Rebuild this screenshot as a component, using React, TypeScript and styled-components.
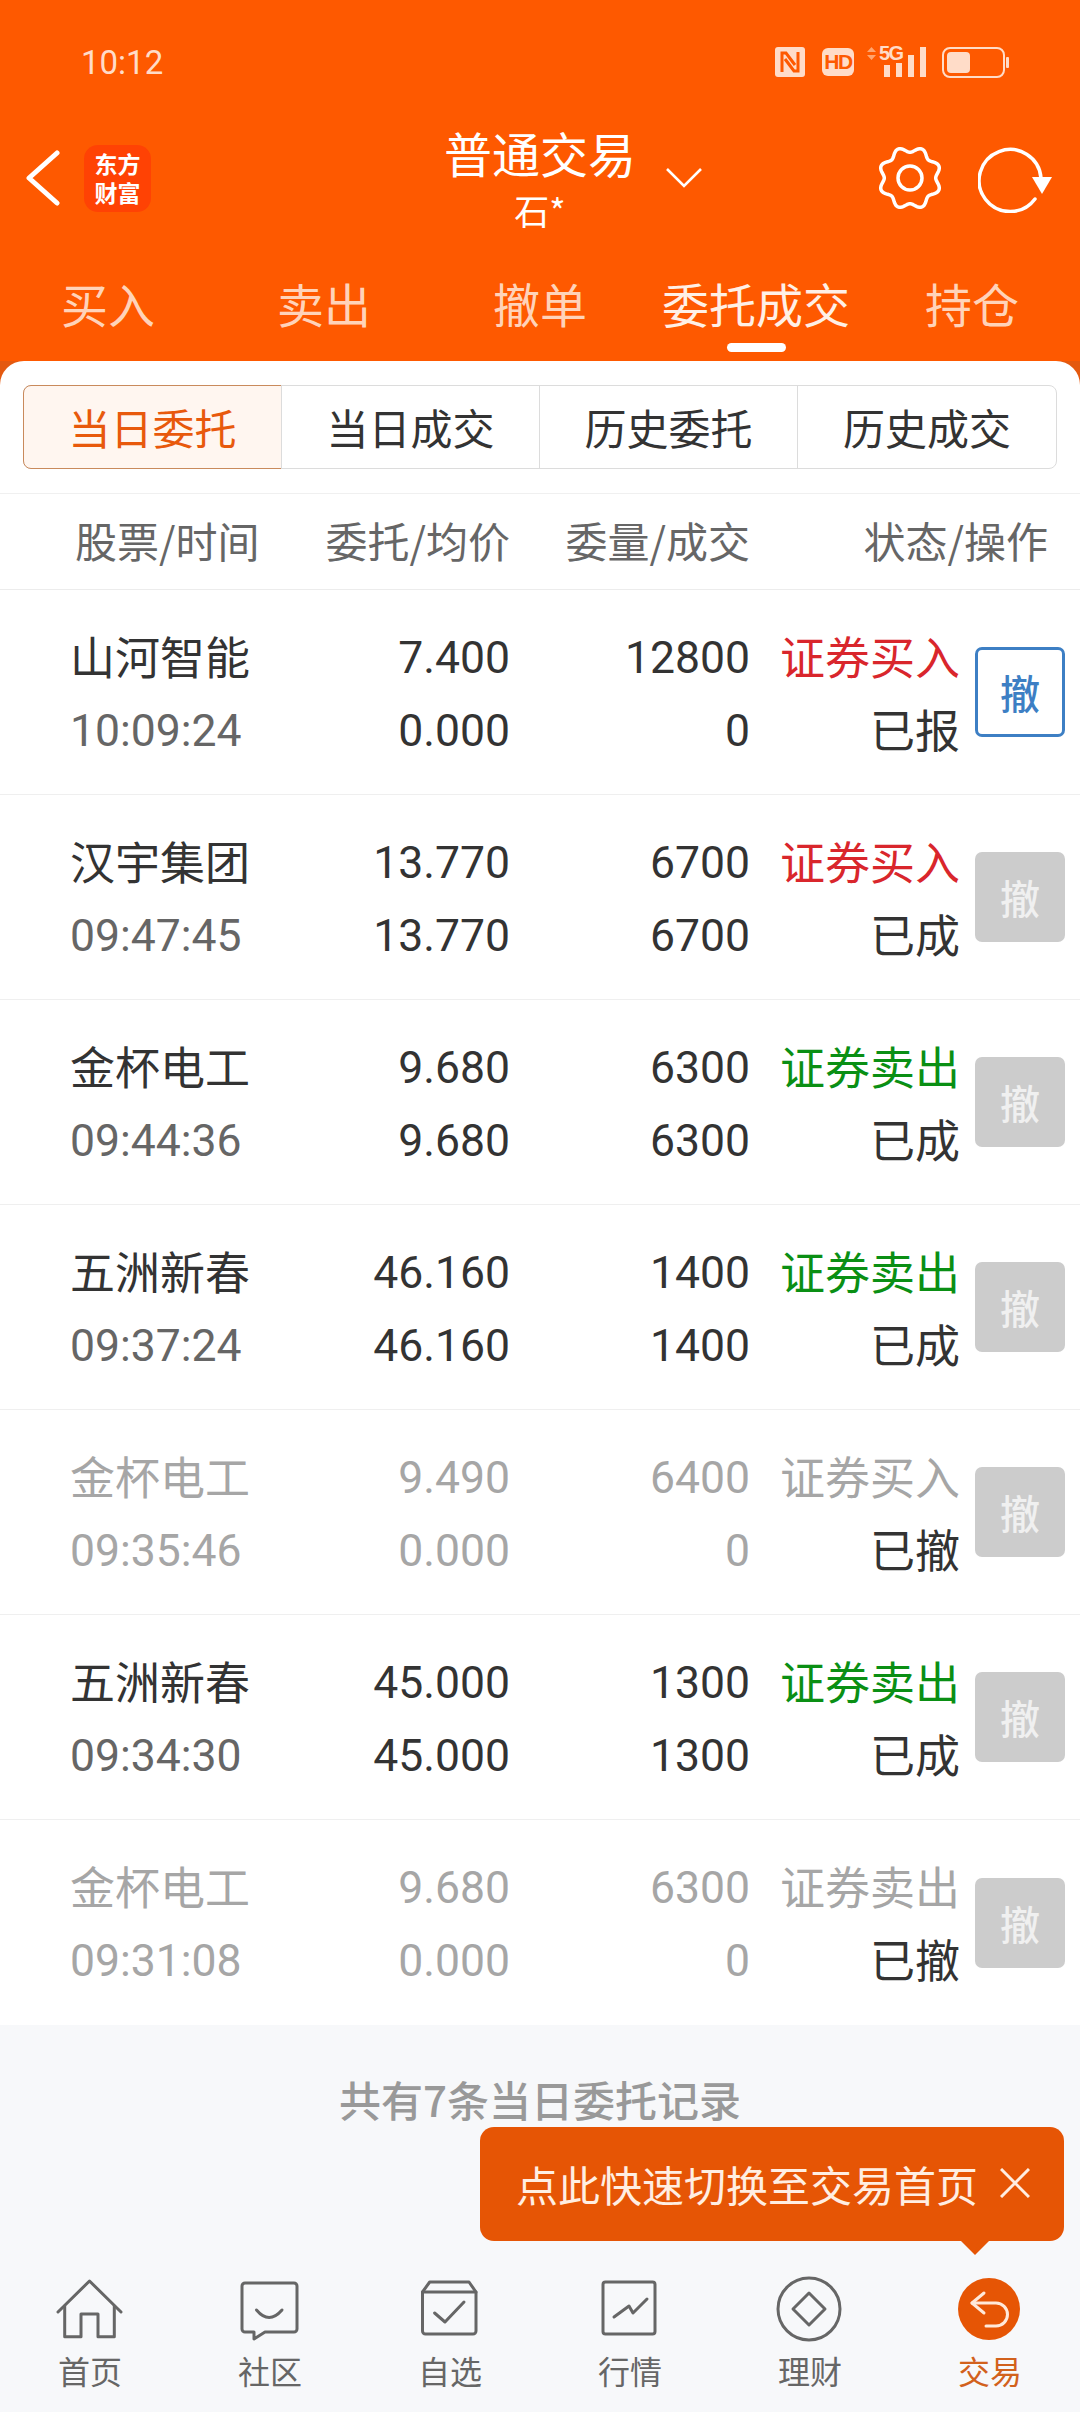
import React from "react";
import styled, { createGlobalStyle } from "styled-components";

const FONT = `"Noto Sans CJK SC", "Noto Sans", sans-serif`;
const NUM = `Roboto, "Noto Sans CJK SC", sans-serif`;
const ORANGE = "#fe5900";

const Global = createGlobalStyle`
  html, body { margin: 0; padding: 0; background: #f7f8fa; }
  * { box-sizing: border-box; }
`;

const Page = styled.div`
  position: relative;
  width: 1080px;
  height: 2412px;
  overflow: hidden;
  display: flex;
  flex-direction: column;
  font-family: ${FONT};
  background: #f7f8fa;
`;
const Top = styled.div`
  background: linear-gradient(${ORANGE} 361px, #e4590f 361px);
  height: 385px;
  display: flex;
  flex-direction: column;
`;
const StatusBar = styled.div`
  height: 110px;
  padding: 14px 71px 0 81px;
  display: flex;
  align-items: center;
  justify-content: space-between;
  color: #ffdcc8;
`;
const Clock = styled.span`
  font: 400 33px ${NUM};
`;
const StatusIcons = styled.div`
  display: flex;
  align-items: center;
`;
const HdBadge = styled.span`
  width: 32px;
  height: 28px;
  margin: 0 13px 0 17px;
  border-radius: 6px;
  background: #ffdcc8;
  color: ${ORANGE};
  font: 700 21px/28px "Liberation Sans", sans-serif;
  text-align: center;
  letter-spacing: -1.5px;
`;
const NetBlock = styled.div`
  position: relative;
  width: 59px;
  height: 30px;
  margin-right: 16px;
`;
const FiveG = styled.span`
  position: absolute;
  left: 12px;
  top: -4px;
  color: #ffdcc8;
  font: 700 20px/20px "Liberation Sans", sans-serif;
  letter-spacing: -1.5px;
`;
const Header = styled.div`
  height: 136px;
  display: grid;
  grid-template-columns: 420px 240px 60px 1fr;
  align-items: center;
  color: #fff;
`;
const HeaderLeft = styled.div`
  display: flex;
  align-items: center;
  gap: 24px;
  padding-left: 26px;
`;
const Logo = styled.div`
  width: 67px;
  height: 67px;
  border-radius: 14px;
  background: #ff4204;
  color: #fff;
  font: 700 23px/29px ${FONT};
  text-align: center;
  padding-top: 4px;
`;
const TitleBox = styled.div`
  display: flex;
  flex-direction: column;
  align-items: center;
`;
const Title = styled.div`
  font-size: 48px;
  line-height: 64px;
`;
const SubTitle = styled.div`
  font-size: 35px;
  line-height: 52px;
`;
const HeaderRight = styled.div`
  display: flex;
  justify-content: flex-end;
  align-items: center;
  gap: 33px;
  padding-right: 26px;
`;
const Tabs = styled.div`
  display: grid;
  grid-template-columns: repeat(5, 1fr);
  height: 139px;
`;
const TabItem = styled.div<{ $active?: boolean }>`
  display: flex;
  flex-direction: column;
  align-items: center;
  font-size: 47px;
  line-height: 60px;
  padding-top: 27px;
  color: ${(p) => (p.$active ? "#fff0e6" : "#ffd3b9")};
`;
const TabLine = styled.span`
  width: 59px;
  height: 9px;
  margin-top: 10px;
  border-radius: 5px;
  background: #fff;
`;
const Card = styled.div`
  margin-top: -24px;
  background: #fff;
  border-radius: 24px 24px 0 0;
  padding-top: 24px;
`;
const Segments = styled.div`
  margin: 0 23px;
  height: 84px;
  display: grid;
  grid-template-columns: repeat(4, 1fr);
  border: 1px solid #dcdcdc;
  border-radius: 8px;
`;
const Segment = styled.div<{ $active?: boolean }>`
  display: flex;
  align-items: center;
  justify-content: center;
  font-size: 42px;
  padding-bottom: 2px;
  margin: -1px 0 -1px -1px;
  color: ${(p) => (p.$active ? "#e8590c" : "#333")};
  background: ${(p) => (p.$active ? "#fff6f0" : "transparent")};
  border: 1px solid ${(p) => (p.$active ? "#c98a5c" : "#dcdcdc")};
  border-radius: ${(p) => (p.$active ? "8px 0 0 8px" : "0")};
  &:last-child { border-right: none; border-top: none; border-bottom: none; margin: 0 0 0 -1px; }
`;
const TableHead = styled.div`
  margin-top: 24px;
  height: 97px;
  padding: 0 0 5px 70px;
  border-top: 1px solid #f0f0f0;
  border-bottom: 1px solid #ececec;
  display: grid;
  grid-template-columns: 230px 210px 240px 298px;
  align-items: center;
  font-size: 42px;
  color: #666;
`;
const HeadCell = styled.div<{ $right?: boolean }>`
  text-align: ${(p) => (p.$right ? "right" : "left")};
  white-space: nowrap;
  margin-left: ${(p) => (p.$right ? "0" : "5px")};
`;
const Row = styled.div`
  height: 205px;
  border-bottom: 1px solid #efefef;
  display: grid;
  grid-template-columns: 230px 210px 240px 210px 104px;
  padding-left: 70px;
  align-items: center;
  &:last-child { border-bottom: none; }
`;
const Stack = styled.div<{ $right?: boolean }>`
  display: flex;
  flex-direction: column;
  align-items: ${(p) => (p.$right ? "flex-end" : "flex-start")};
  padding-top: 3px;
`;
const Line = styled.div<{ $color: string; $num?: boolean }>`
  height: 73px;
  line-height: ${(p) => (p.$num ? "74px" : "69px")};
  white-space: nowrap;
  color: ${(p) => p.$color};
  font-family: ${(p) => (p.$num ? NUM : FONT)};
  font-size: ${(p) => (p.$num ? "44.5px" : "45px")};
`;
const CancelBtn = styled.div<{ $on?: boolean }>`
  justify-self: end;
  width: 90px;
  height: 90px;
  border-radius: 7px;
  display: flex;
  align-items: center;
  justify-content: center;
  font-size: 40px;
  font-weight: 500;
  color: ${(p) => (p.$on ? "#3d7fc4" : "#f0f0f0")};
  background: ${(p) => (p.$on ? "#fff" : "#cccccc")};
  border: ${(p) => (p.$on ? "3px solid #3d7fc4" : "none")};
  margin-right: -1px;
`;
const Footer = styled.div`
  flex: 1;
  padding-top: 44px;
  text-align: center;
  font-size: 42px;
  line-height: 60px;
  font-weight: 500;
  color: #999;
`;
const TabBar = styled.div`
  height: 142px;
  display: grid;
  grid-template-columns: repeat(6, 180px);
`;
const BarItem = styled.div<{ $active?: boolean }>`
  display: flex;
  flex-direction: column;
  align-items: center;
  padding-top: 6px;
  font-size: 32px;
  line-height: 44px;
  color: ${(p) => (p.$active ? "#d2611c" : "#666")};
  svg { display: block; margin-bottom: 2px; }
`;
const Tip = styled.div`
  position: absolute;
  left: 480px;
  top: 2127px;
  width: 584px;
  height: 114px;
  padding: 0 34px 2px 36px;
  border-radius: 14px;
  background: #e65505;
  color: #ffeee2;
  display: flex;
  align-items: center;
  justify-content: space-between;
  font-size: 42px;
  white-space: nowrap;
  &::after {
    content: "";
    position: absolute;
    left: 480px;
    top: 113px;
    border: 15px solid transparent;
    border-top-color: #e65505;
    border-bottom: none;
  }
`;

type O = { name: string; time: string; p1: string; p2: string; q1: string; q2: string; act: string; st: string; kind: "buy" | "sell" | "off"; on?: boolean };
const rows: O[] = [
  { name: "山河智能", time: "10:09:24", p1: "7.400", p2: "0.000", q1: "12800", q2: "0", act: "证券买入", st: "已报", kind: "buy", on: true },
  { name: "汉宇集团", time: "09:47:45", p1: "13.770", p2: "13.770", q1: "6700", q2: "6700", act: "证券买入", st: "已成", kind: "buy" },
  { name: "金杯电工", time: "09:44:36", p1: "9.680", p2: "9.680", q1: "6300", q2: "6300", act: "证券卖出", st: "已成", kind: "sell" },
  { name: "五洲新春", time: "09:37:24", p1: "46.160", p2: "46.160", q1: "1400", q2: "1400", act: "证券卖出", st: "已成", kind: "sell" },
  { name: "金杯电工", time: "09:35:46", p1: "9.490", p2: "0.000", q1: "6400", q2: "0", act: "证券买入", st: "已撤", kind: "off" },
  { name: "五洲新春", time: "09:34:30", p1: "45.000", p2: "45.000", q1: "1300", q2: "1300", act: "证券卖出", st: "已成", kind: "sell" },
  { name: "金杯电工", time: "09:31:08", p1: "9.680", p2: "0.000", q1: "6300", q2: "0", act: "证券卖出", st: "已撤", kind: "off" },
];

const gearPath = (() => {
  const pts: string[] = [];
  for (let i = 0; i < 160; i++) {
    const t = (i / 160) * Math.PI * 2;
    const r = 28.5 + 2.8 * Math.cos(8 * t + Math.PI);
    pts.push(`${(35 + r * Math.sin(t)).toFixed(2)} ${(35 - r * Math.cos(t)).toFixed(2)}`);
  }
  return "M" + pts.join("L") + "Z";
})();

const S = { fill: "none", stroke: "#666", strokeWidth: 3, strokeLinejoin: "round" as const, strokeLinecap: "round" as const };

const icons: Record<string, React.ReactNode> = {
  home: (
    <g {...S}>
      <path d="M4 36 35.5 5 67 36" />
      <path d="M10.7 30V60.7H27V38H44V60.7H60.3V30" />
    </g>
  ),
  chat: (
    <g {...S}>
      <path d="M11 7H60a3 3 0 0 1 3 3V53a3 3 0 0 1-3 3H31L20 63V56H11a3 3 0 0 1-3-3V10a3 3 0 0 1 3-3Z" />
      <path d="M22.5 34Q35 49 48 34" />
    </g>
  ),
  fav: (
    <g {...S}>
      <path d="M8.5 16 15.7 6H55L62 16V55a3 3 0 0 1-3 3H11.5a3 3 0 0 1-3-3Z" />
      <path d="M8.5 16H62" />
      <path d="M20.6 37 31 46 50 26" />
    </g>
  ),
  market: (
    <g {...S}>
      <rect x="9" y="6" width="52" height="52" rx="2.5" />
      <path d="M20 41 35 30 39 37 53 23" />
    </g>
  ),
  wealth: (
    <g {...S}>
      <circle cx="35" cy="33" r="31" />
      <path d="M35 17 51 33 35 49 19 33Z" />
    </g>
  ),
  trade: (
    <g>
      <circle cx="35" cy="33" r="31" fill="#e65505" />
      <g fill="none" stroke="#ffe9da" strokeWidth="3" strokeLinecap="round" strokeLinejoin="round">
        <path d="M30 17 18 27 30 37" />
        <path d="M18 27H42a11.5 11.5 0 0 1 0 23H32" />
      </g>
    </g>
  ),
};

const bar = [
  ["home", "首页"],
  ["chat", "社区"],
  ["fav", "自选"],
  ["market", "行情"],
  ["wealth", "理财"],
  ["trade", "交易"],
];

export default function App() {
  return (
    <Page>
      <Global />
      <Top>
        <StatusBar>
          <Clock>10:12</Clock>
          <StatusIcons>
            <svg width="30" height="30" viewBox="0 0 30 30">
              <rect width="30" height="30" rx="3" fill="#ffdcc8" />
              <path d="M7 25V6H11L20 18M23 5V24H19L10 12" fill="none" stroke={ORANGE} strokeWidth="3" />
            </svg>
            <HdBadge>HD</HdBadge>
            <NetBlock>
              <svg width="59" height="30" viewBox="0 0 59 30" style={{ display: "block" }}>
                <path d="M0 5 4.5 0 9 5ZM0 8H9L4.5 13Z" fill="#ffa56f" />
                <rect x="17" y="18" width="6" height="12" fill="#ffdcc8" />
                <rect x="29" y="16" width="6" height="14" fill="#ffdcc8" />
                <rect x="41" y="8" width="6" height="22" fill="#ffdcc8" />
                <rect x="53" y="0" width="6" height="30" fill="#ffdcc8" />
              </svg>
              <FiveG>5G</FiveG>
            </NetBlock>
            <svg width="67" height="31" viewBox="0 0 67 31">
              <rect x="1" y="1" width="61" height="29" rx="7" fill="none" stroke="#ffdcc8" strokeWidth="2" />
              <rect x="5" y="5" width="23" height="21" rx="4" fill="#ffdcc8" />
              <rect x="64" y="10" width="3" height="11" rx="1" fill="#ffdcc8" />
            </svg>
          </StatusIcons>
        </StatusBar>
        <Header>
          <HeaderLeft>
            <svg width="34" height="56" viewBox="0 0 34 56">
              <path d="M31 3 3 28 31 53" fill="none" stroke="#fff" strokeWidth="5" strokeLinecap="round" strokeLinejoin="round" />
            </svg>
            <Logo>东方<br />财富</Logo>
          </HeaderLeft>
          <TitleBox>
            <Title>普通交易</Title>
            <SubTitle>石*</SubTitle>
          </TitleBox>
          <svg width="38" height="24" viewBox="0 0 38 24" style={{ marginLeft: 5 }}>
            <path d="M2 3 19 20 36 3" fill="none" stroke="#fff" strokeWidth="2.6" />
          </svg>
          <HeaderRight>
            <svg width="70" height="70" viewBox="0 0 70 70">
              <path d={gearPath} fill="none" stroke="#fff" strokeWidth="3.5" strokeLinejoin="round" />
              <circle cx="35" cy="35" r="12" fill="none" stroke="#fff" strokeWidth="3.5" />
            </svg>
            <svg width="76" height="70" viewBox="0 0 76 70">
              <path d="M57 56A31 31 0 1 1 63 35" fill="none" stroke="#fff" strokeWidth="3.5" strokeLinecap="round" />
              <path d="M54 34H74L64 51Z" fill="#fff" />
            </svg>
          </HeaderRight>
        </Header>
        <Tabs>
          <TabItem>买入</TabItem>
          <TabItem>卖出</TabItem>
          <TabItem>撤单</TabItem>
          <TabItem $active>委托成交<TabLine /></TabItem>
          <TabItem>持仓</TabItem>
        </Tabs>
      </Top>
      <Card>
        <Segments>
          <Segment $active>当日委托</Segment>
          <Segment>当日成交</Segment>
          <Segment>历史委托</Segment>
          <Segment>历史成交</Segment>
        </Segments>
        <TableHead>
          <HeadCell>股票/时间</HeadCell>
          <HeadCell $right>委托/均价</HeadCell>
          <HeadCell $right>委量/成交</HeadCell>
          <HeadCell $right>状态/操作</HeadCell>
        </TableHead>
        {rows.map((r, i) => {
          const off = r.kind === "off";
          const dark = off ? "#a6a6a6" : "#333";
          const timeC = off ? "#a6a6a6" : "#666";
          const act = off ? "#a6a6a6" : r.kind === "buy" ? "#d9262c" : "#0a8f14";
          return (
            <Row key={i}>
              <Stack>
                <Line $color={dark}>{r.name}</Line>
                <Line $color={timeC} $num>{r.time}</Line>
              </Stack>
              <Stack $right>
                <Line $color={dark} $num>{r.p1}</Line>
                <Line $color={dark} $num>{r.p2}</Line>
              </Stack>
              <Stack $right>
                <Line $color={dark} $num>{r.q1}</Line>
                <Line $color={dark} $num>{r.q2}</Line>
              </Stack>
              <Stack $right>
                <Line $color={act}>{r.act}</Line>
                <Line $color="#333">{r.st}</Line>
              </Stack>
              <CancelBtn $on={r.on}>撤</CancelBtn>
            </Row>
          );
        })}
      </Card>
      <Footer>共有7条当日委托记录</Footer>
      <TabBar>
        {bar.map(([k, label]) => (
          <BarItem key={k} $active={k === "trade"}>
            <svg width="72" height="70" viewBox="0 0 72 70">{icons[k]}</svg>
            {label}
          </BarItem>
        ))}
      </TabBar>
      <Tip>
        点此快速切换至交易首页
        <svg width="30" height="30" viewBox="0 0 30 30">
          <path d="M1 1 29 29M29 1 1 29" fill="none" stroke="#ffeee2" strokeWidth="3" />
        </svg>
      </Tip>
    </Page>
  );
}
